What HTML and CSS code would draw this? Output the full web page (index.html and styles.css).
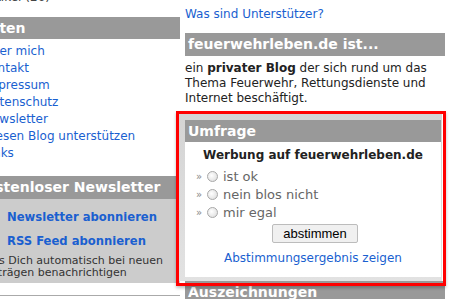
FILE: index.html
```html
<!DOCTYPE html>
<html lang="de">
<head>
    <meta charset="UTF-8">
    <meta name="viewport" content="width=device-width, initial-scale=1.0">
    <title>feuerwehrleben.de</title>
    <link rel="stylesheet" href="styles.css">
</head>
<body>
    <div class="page">
        <div class="sidebar">
            <div class="cut-line">Artikel (26)</div>
            <h2 class="box-title first">Seiten</h2>
            <ul class="links">
                <li><a href="#">Über mich</a></li>
                <li><a href="#">Kontakt</a></li>
                <li><a href="#">Impressum</a></li>
                <li><a href="#">Datenschutz</a></li>
                <li><a href="#">Newsletter</a></li>
                <li><a href="#">Diesen Blog unterstützen</a></li>
                <li><a href="#">Links</a></li>
            </ul>
            <h2 class="box-title">Kostenloser Newsletter</h2>
            <div class="newsbox">
                <a class="sub-link" href="#">Newsletter abonnieren</a>
                <a class="sub-link" href="#">RSS Feed abonnieren</a>
                <p class="hint">Lass Dich automatisch bei neuen<br>Beiträgen benachrichtigen</p>
            </div>
            <div class="rule"></div>
        </div>

        <div class="main">
            <a class="top-link" href="#">Was sind Unterstützer?</a>
            <h2 class="box-title">feuerwehrleben.de ist...</h2>
            <p class="about">ein <b>privater Blog</b> der sich rund um das Thema Feuerwehr, Rettungsdienste und Internet beschäftigt.</p>

            <div class="poll">
                <h2 class="box-title">Umfrage</h2>
                <div class="poll-body">
                    <div class="question">Werbung auf feuerwehrleben.de</div>
                    <ul class="options">
                        <li><span class="arrow">»</span><input type="radio" name="vote" id="o1"><label for="o1">ist ok</label></li>
                        <li><span class="arrow">»</span><input type="radio" name="vote" id="o2"><label for="o2">nein blos nicht</label></li>
                        <li><span class="arrow">»</span><input type="radio" name="vote" id="o3"><label for="o3">mir egal</label></li>
                    </ul>
                    <div class="actions"><button>abstimmen</button></div>
                    <a class="result-link" href="#">Abstimmungsergebnis zeigen</a>
                </div>
            </div>

            <h2 class="box-title">Auszeichnungen</h2>
        </div>
    </div>

    <!-- highlight frame from the screenshot -->
    <div class="marker"></div>
</body>
</html>
```

FILE: styles.css
```css
html, body {
    overflow: hidden;
}
body {
    margin: 0;
    font-family: "DejaVu Sans", Verdana, sans-serif;
    font-size: 12px;
    color: #222;
    background: #fff;
}
a {
    color: #1a5fd0;
    text-decoration: none;
}
.page {
    display: flex;
    margin-left: -28px;
}
.sidebar {
    width: 208px;
    flex-shrink: 0;
}
.main {
    width: 260px;
    flex-shrink: 0;
    margin-left: 5px;
}
.box-title {
    margin: 0;
    padding: 0 3px;
    height: 23px;
    line-height: 23px;
    font-size: 14px;
    font-weight: bold;
    color: #fff;
    background: #999;
    white-space: nowrap;
    overflow: hidden;
}
.cut-line {
    margin-top: -11px;
    padding-left: 11px;
    line-height: 17px;
    color: #444;
}
.sidebar .first {
    margin-top: 11px;
    height: 22px;
    line-height: 22px;
}
.links {
    list-style: none;
    margin: 4px 0 14px;
    padding: 0 0 0 11px;
    line-height: 17px;
}
.newsbox {
    background: #ccc;
    padding: 6px 0 4px 35px;
}
.sub-link {
    display: block;
    line-height: 24px;
    font-weight: bold;
    font-size: 11.6px;
}
.hint {
    margin: 2px 0 0 -26.5px;
    font-size: 11px;
    line-height: 12px;
    color: #333;
}
.rule {
    margin-top: 12px;
    height: 1px;
    background: #aaa;
}
.top-link {
    display: block;
    padding-top: 7px;
    line-height: 15px;
}
.main > .box-title:first-of-type {
    margin-top: 11px;
}
.about {
    margin: 5px 0 0;
    line-height: 15px;
}
.poll {
    margin: 8px 3px 0 -6px;
    padding: 6px 1px 4px 6px;
    background: linear-gradient(#d4d4d4, #e2e2e2);
}
.poll .box-title {
    height: 22px;
    line-height: 22px;
}
.poll-body {
    background: #fff;
    padding: 5px 0 11px;
    text-align: center;
}
.question {
    font-weight: bold;
    line-height: 16px;
}
.options {
    list-style: none;
    margin: 4px 0 0;
    padding: 0 0 0 11px;
    text-align: left;
}
.options li {
    height: 18px;
    display: flex;
    align-items: center;
}
.arrow {
    font-size: 10px;
    color: #888;
    width: 11px;
}
.options input {
    appearance: none;
    width: 11px;
    height: 11px;
    margin: 0 5px 0 0;
    border: 1px solid #a8a8a8;
    border-radius: 50%;
    background: radial-gradient(circle at 40% 40%, #fff, #d8d8d8);
}
.options label {
    font-size: 13px;
    color: #666;
}
.actions {
    margin-top: 3px;
}
.actions button {
    width: 86px;
    height: 19px;
    padding: 0;
    margin-left: 4px;
    font-family: "Liberation Sans", Arial, sans-serif;
    font-size: 13px;
    color: #000;
    background: #f0f0f0;
    border: 1px solid #bcbcbc;
    border-radius: 2px;
}
.result-link {
    display: block;
    margin-top: 8px;
    line-height: 15px;
}
.marker {
    position: absolute;
    left: 176px;
    top: 111px;
    width: 270px;
    height: 175px;
    box-sizing: border-box;
    border: 3px solid #f00;
    box-shadow: 0 2px 3px rgba(0, 0, 0, 0.25);
    pointer-events: none;
}
```
